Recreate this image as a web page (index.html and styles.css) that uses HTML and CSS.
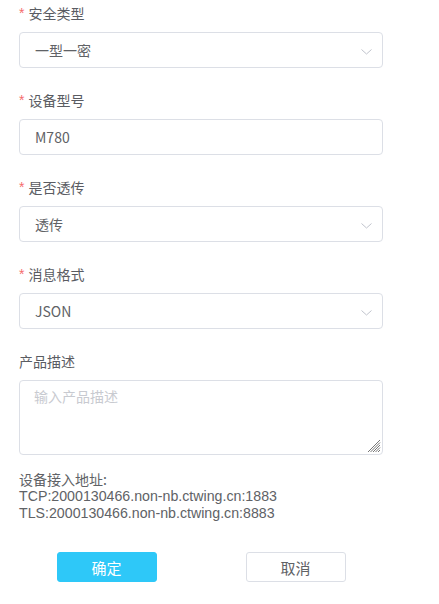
FILE: index.html
```html
<!DOCTYPE html>
<html lang="zh">
<head>
<meta charset="utf-8">
<link rel="stylesheet" href="styles.css">
</head>
<body>
<form class="form">
  <div class="item">
    <div class="label"><span class="star">*</span>安全类型</div>
    <div class="control select"><span class="value">一型一密</span>
      <svg class="arrow" width="11" height="6" viewBox="0 0 11 6"><path d="M0.5 0.5 L5.5 5 L10.5 0.5" fill="none" stroke="#c0c4cc" stroke-width="1"/></svg>
    </div>
  </div>
  <div class="item">
    <div class="label"><span class="star">*</span>设备型号</div>
    <div class="control"><span class="value">M780</span></div>
  </div>
  <div class="item">
    <div class="label"><span class="star">*</span>是否透传</div>
    <div class="control select"><span class="value">透传</span>
      <svg class="arrow" width="11" height="6" viewBox="0 0 11 6"><path d="M0.5 0.5 L5.5 5 L10.5 0.5" fill="none" stroke="#c0c4cc" stroke-width="1"/></svg>
    </div>
  </div>
  <div class="item">
    <div class="label"><span class="star">*</span>消息格式</div>
    <div class="control select"><span class="value">JSON</span>
      <svg class="arrow" width="11" height="6" viewBox="0 0 11 6"><path d="M0.5 0.5 L5.5 5 L10.5 0.5" fill="none" stroke="#c0c4cc" stroke-width="1"/></svg>
    </div>
  </div>
  <div class="item">
    <div class="label">产品描述</div>
    <div class="textarea"><span class="placeholder">输入产品描述</span>
      <svg class="grip" width="14" height="14" viewBox="0 0 14 14"><path d="M13 1 L1 13 M13 3.5 L3.5 13 M13 6 L6 13 M13 8.5 L8.5 13 M13 11 L11 13" stroke="#777" stroke-width="1"/></svg>
    </div>
  </div>
  <div class="address">
    <div>设备接入地址:</div>
    <div>TCP:2000130466.non-nb.ctwing.cn:1883</div>
    <div>TLS:2000130466.non-nb.ctwing.cn:8883</div>
  </div>
  <div class="buttons">
    <div class="btn primary">确定</div>
    <div class="btn">取消</div>
  </div>
</form>
</body>
</html>
```
FILE: styles.css
```css
html, body {
  margin: 0;
  padding: 0;
  background: #fff;
}
body {
  font-family: "Noto Sans CJK SC", "Liberation Sans", sans-serif;
  color: #606266;
}
.form {
  padding: 3px 0 0 19px;
  width: 364px;
}
.item {
  margin-bottom: 22px;
}
.label {
  font-size: 14px;
  line-height: 21px;
  height: 21px;
  margin-bottom: 8px;
  color: #5a5c62;
  display: flex;
  align-items: center;
}
.star {
  color: #f56c6c;
  margin-right: 4px;
  font-family: "Liberation Sans", sans-serif;
}
.control {
  box-sizing: border-box;
  height: 36px;
  border: 1px solid #dcdfe6;
  border-radius: 4px;
  padding: 0 15px;
  display: flex;
  align-items: center;
  justify-content: space-between;
  font-size: 14px;
  color: #606266;
}
.value {
  font-family: "Noto Sans CJK SC", "Liberation Sans", sans-serif;
}
.arrow {
  display: block;
  margin-right: -5px;
  margin-top: 4px;
}
.textarea {
  box-sizing: border-box;
  height: 75px;
  border: 1px solid #dcdfe6;
  border-radius: 4px;
  padding: 5px 14px;
  font-size: 14px;
  line-height: 21px;
  position: relative;
}
.placeholder {
  color: #c8cad0;
}
.grip {
  position: absolute;
  right: 1px;
  bottom: 1px;
}
.address {
  margin-top: -6px;
  font-family: "Liberation Sans", "Noto Sans CJK SC", sans-serif;
  font-size: 14.2px;
  line-height: 17px;
  color: #606266;
}
.address div:first-child {
  font-family: "Noto Sans CJK SC", sans-serif;
  font-size: 14px;
}
.buttons {
  display: flex;
  justify-content: center;
  gap: 89px;
  margin-top: 30px;
}
.btn {
  box-sizing: border-box;
  width: 100px;
  height: 30px;
  border: 1px solid #dcdfe6;
  border-radius: 3px;
  display: flex;
  align-items: center;
  justify-content: center;
  font-size: 15px;
  color: #606266;
  background: #fff;
}
.btn.primary {
  background: #2ec8f8;
  border-color: #2ec8f8;
  color: #fff;
}
```
